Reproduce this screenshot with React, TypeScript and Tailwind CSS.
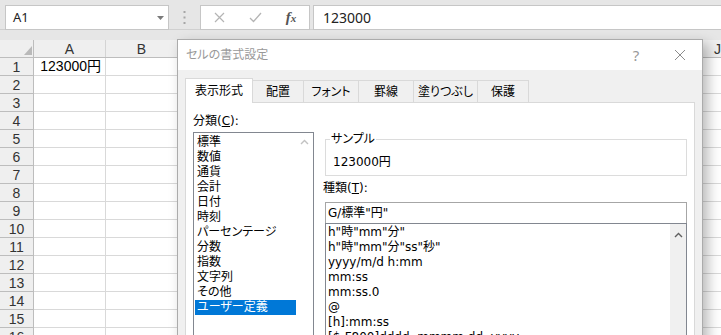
import React from 'react';

const COLUMNS = ['A', 'B', 'C', 'D', 'E', 'F', 'G', 'H', 'I', 'J'];
// C..I sit fully under the dialog, so their letters are never seen
const HIDDEN_COLUMNS = ['C', 'D', 'E', 'F', 'G', 'H', 'I'];
const ROWS = Array.from({ length: 16 }, (_, i) => i + 1);

const TABS = [
  { label: '表示形式', width: 'w-[68px]', active: true },
  { label: '配置', width: 'w-[52px]' },
  { label: 'フォント', width: 'w-[56px]' },
  { label: '罫線', width: 'w-[56px]' },
  { label: '塗りつぶし', width: 'w-[65px]' },
  { label: '保護', width: 'w-[52px]' },
];

const CATEGORIES = [
  '標準',
  '数値',
  '通貨',
  '会計',
  '日付',
  '時刻',
  'パーセンテージ',
  '分数',
  '指数',
  '文字列',
  'その他',
  'ユーザー定義',
];

const FORMATS = [
  'h"時"mm"分"',
  'h"時"mm"分"ss"秒"',
  'yyyy/m/d h:mm',
  'mm:ss',
  'mm:ss.0',
  '@',
  '[h]:mm:ss',
  '[$-F800]dddd, mmmm dd, yyyy',
];

// small chevron used by the list scrollbars
const ChevronUp = ({ color }: { color: string }) => (
  <svg width="9" height="6" viewBox="0 0 9 6">
    <path d="M1 5L4.5 1.5L8 5" fill="none" stroke={color} strokeWidth="1.4" />
  </svg>
);

function FormulaBar() {
  return (
    <div className="flex h-[30px] border-b border-[#d0d0d0] pt-[5px] font-['Noto_Sans',sans-serif]">
      {/* name box */}
      <div className="ml-[5px] flex h-[25px] w-[164px] shrink-0 items-center border border-[#c6c6c6] bg-white pl-[7px] pr-[4px]">
        <span className="text-[13px] text-[#222]">A1</span>
        <svg className="ml-auto" width="7" height="4" viewBox="0 0 7 4">
          <path d="M0 0H7L3.5 4Z" fill="#7a7a7a" />
        </svg>
      </div>

      <div className="flex w-[31px] shrink-0 items-center justify-center">
        <svg width="3" height="13" viewBox="0 0 3 13">
          <rect x="0.5" y="0" width="2" height="2" fill="#a6a6a6" />
          <rect x="0.5" y="5.5" width="2" height="2" fill="#a6a6a6" />
          <rect x="0.5" y="11" width="2" height="2" fill="#a6a6a6" />
        </svg>
      </div>

      {/* cancel / enter / insert function */}
      <div className="flex h-[25px] w-[110px] shrink-0 items-center border border-[#c6c6c6] bg-white">
        <div className="flex w-[36px] justify-center">
          <svg width="11" height="11" viewBox="0 0 11 11">
            <path d="M1 1L10 10M10 1L1 10" stroke="#b4b4b4" strokeWidth="1.2" />
          </svg>
        </div>
        <div className="flex w-[36px] justify-center">
          <svg width="13" height="11" viewBox="0 0 13 11">
            <path d="M1 6L4.5 9.5L12 1" fill="none" stroke="#b4b4b4" strokeWidth="1.3" />
          </svg>
        </div>
        <div className="flex w-[36px] justify-center">
          <span className="font-['Liberation_Serif',serif] text-[15px] font-bold italic leading-none text-[#555]">
            f<span className="text-[11px]">x</span>
          </span>
        </div>
      </div>

      <div className="ml-[3px] flex h-[25px] flex-1 items-center border border-r-0 border-[#c6c6c6] bg-white pl-[9px] text-[14px] text-[#222]">
        123000
      </div>
    </div>
  );
}

function Sheet() {
  return (
    <div className="bg-white font-['Liberation_Sans','Noto_Sans_CJK_JP',sans-serif] text-[14px] text-[#333]">
      {/* column headers */}
      <div className="flex h-[18px] border-b border-[#bdbdbd] bg-[#efefef]">
        <div className="flex w-[34px] shrink-0 items-end justify-end border-r border-[#bdbdbd] pb-[2px] pr-[1px]">
          <svg width="8" height="9" viewBox="0 0 8 9">
            <path d="M8 0V9H0Z" fill="#b9b9b9" />
          </svg>
        </div>
        {COLUMNS.map((c) => (
          <div
            key={c}
            className="flex w-[72px] shrink-0 items-center justify-center border-r border-[#d4d4d4] pt-[1px] leading-[16px]"
          >
            {HIDDEN_COLUMNS.includes(c) ? '' : c}
          </div>
        ))}
      </div>

      {ROWS.map((r) => (
        <div key={r} className="flex h-[18px]">
          <div className="w-[34px] shrink-0 border-b border-r border-[#bdbdbd] bg-[#efefef] pt-[1px] text-center leading-[16px]">
            {r}
          </div>
          {COLUMNS.map((c) => (
            <div
              key={c}
              className="w-[72px] shrink-0 border-b border-r border-[#d9d9d9] pr-[4px] text-right leading-[17px] text-black"
            >
              {r === 1 && c === 'A' ? '123000円' : ''}
            </div>
          ))}
        </div>
      ))}
    </div>
  );
}

function FormatCellsDialog() {
  return (
    <div className="absolute left-[177px] top-[39px] flex h-[320px] w-[526px] flex-col border border-[#ababab] bg-[#f0f0f0] font-['DejaVu_Sans','Noto_Sans_CJK_JP',sans-serif] text-[12px] shadow-[5px_5px_12px_rgba(0,0,0,0.28)] [font-feature-settings:'palt']">
      {/* title bar */}
      <div className="flex h-[30px] shrink-0 items-center bg-white">
        <span className="pl-[8px] text-[12px] text-[#999]">セルの書式設定</span>
        <div className="ml-auto flex items-center">
          <div className="flex w-[44px] justify-center font-['Noto_Sans',sans-serif] text-[15px] leading-none text-[#999]">
            ?
          </div>
          <div className="flex w-[44px] justify-center">
            <svg width="12" height="12" viewBox="0 0 12 12">
              <path d="M1 1L11 11M11 1L1 11" stroke="#8c8c8c" strokeWidth="1" />
            </svg>
          </div>
        </div>
      </div>

      <div className="flex flex-1 flex-col px-[7px] pt-[8px]">
        {/* tabs */}
        <div className="flex h-[24px] shrink-0 items-end">
          {TABS.map((t, i) => (
            <div
              key={t.label}
              className={
                t.active
                  ? `relative z-10 mb-[-1px] flex h-[25px] items-center justify-center border border-b-0 border-[#d9d9d9] bg-white ${t.width}`
                  : `flex h-[22px] items-center justify-center border border-b-0 border-[#d9d9d9] bg-[#f0f0f0] ${t.width} ${i > 0 ? '-ml-[1px]' : ''}`
              }
            >
              {t.label}
            </div>
          ))}
        </div>

        {/* tab page */}
        <div className="flex flex-1 border border-[#d9d9d9] bg-white pl-[7px] pt-[11px] leading-[15px]">
          {/* category column */}
          <div className="w-[121px] shrink-0">
            <div>
              分類(<span className="underline">C</span>):
            </div>
            <div className="mt-[3px] flex h-[220px] border border-[#828790]">
              <div className="w-[102px] pl-[1px] pt-[2px]">
                {CATEGORIES.map((c) => (
                  <div
                    key={c}
                    className={
                      c === 'ユーザー定義'
                        ? 'h-[15px] bg-[#0078d7] pl-[2px] text-white'
                        : 'h-[15px] pl-[2px]'
                    }
                  >
                    {c}
                  </div>
                ))}
              </div>
              <div className="flex h-[18px] w-[17px] items-center justify-center">
                <ChevronUp color="#c2c2c2" />
              </div>
            </div>
          </div>

          {/* sample / type column */}
          <div className="ml-[9px] w-[364px] shrink-0">
            <fieldset className="ml-[2px] mt-[18px] w-[362px] border border-[#dcdcdc] pb-[5px] pl-[7px]">
              <legend className="ml-[-3px] px-[1px]">サンプル</legend>
              <div className="pt-[8px]">123000円</div>
            </fieldset>

            <div className="mt-[5px]">
              種類(<span className="underline">T</span>):
            </div>
            <div className="ml-[2px] mt-[6px] flex h-[21px] w-[362px] items-center border border-b-0 border-[#a6a6a6] pl-[2px]">
              G/標準"円"
            </div>
            <div className="ml-[2px] flex h-[130px] w-[362px] border border-[#828790]">
              <div className="flex-1 pl-[2px] pt-[1px]">
                {FORMATS.map((f) => (
                  <div key={f} className="h-[15px] whitespace-nowrap">
                    {f}
                  </div>
                ))}
              </div>
              <div className="w-[16px] bg-[#f0f0f0]">
                <div className="flex h-[22px] items-center justify-center">
                  <ChevronUp color="#606060" />
                </div>
              </div>
            </div>
          </div>
        </div>
      </div>
    </div>
  );
}

export default function App() {
  return (
    <div className="relative h-[335px] w-[721px] overflow-hidden bg-[#e6e6e6] text-black">
      <FormulaBar />
      <div className="h-[10px]" />
      <Sheet />
      <FormatCellsDialog />
    </div>
  );
}
